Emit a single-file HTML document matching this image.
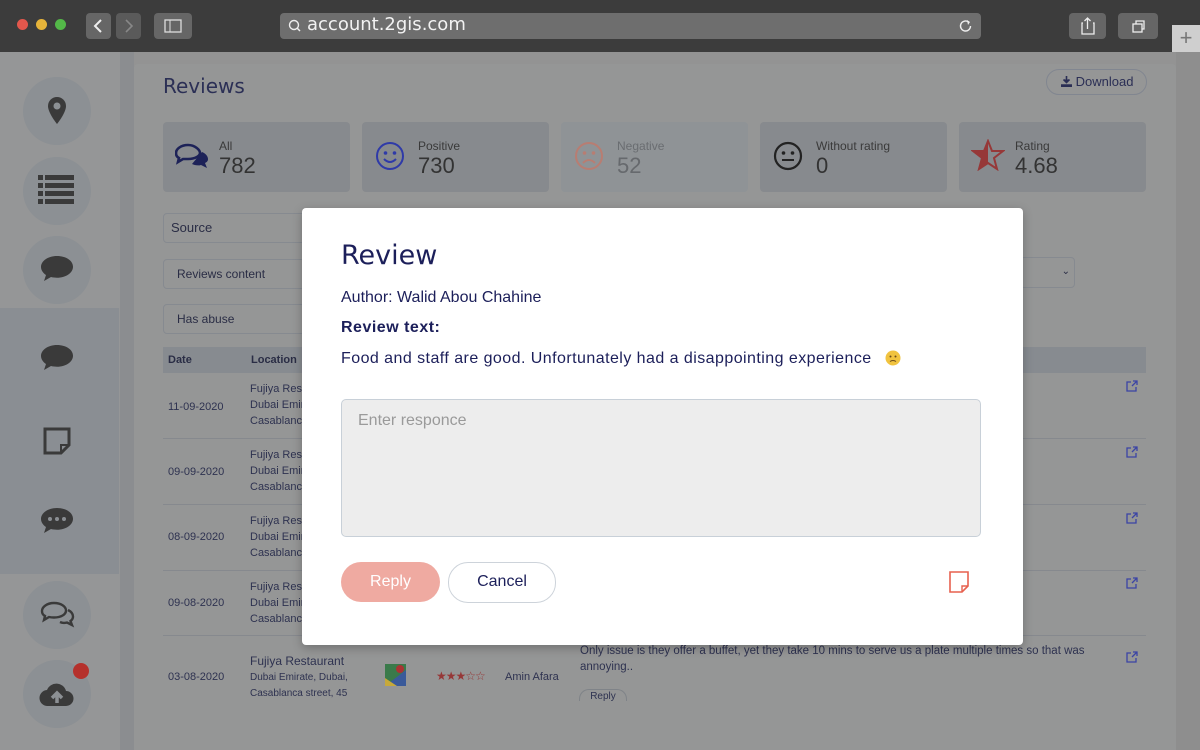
<!DOCTYPE html>
<html><head><meta charset="utf-8"><style>
*{box-sizing:border-box;margin:0;padding:0}
body{width:1200px;height:750px;overflow:hidden;background:#939393;font-family:"Liberation Sans","DejaVu Sans",sans-serif;position:relative}
.a{position:absolute}
.top{left:0;top:0;width:1200px;height:52px;background:#3c3c3c}
.dot{top:19px;width:11px;height:11px;border-radius:50%}
.btn{background:#666;border-radius:4px;top:13px;height:26px}
.side{left:0;top:52px;width:120px;height:698px;background:#959697}
.circ{left:23px;width:68px;height:68px;border-radius:50%;background:#8c9094}
.card{top:122px;width:187px;height:70px;border-radius:4px;background:#878a8e}
.lbl{font-size:12px;color:#3a3a3a}
.num{font-size:22px;color:#333}
.inp{left:163px;width:145px;height:30px;border:1px solid #868a90;border-radius:4px;font-size:12px;color:#2a2d45;padding-left:13px;line-height:28px}
.txt{font-size:11px;color:#2e3250}
.sm{font-size:10px;color:#2e3250;line-height:16px}
.row{left:163px;width:983px;height:1px;background:#86898e}
</style></head><body>
<div class="a top"></div>
<div class="a dot" style="left:17px;background:#e2574c"></div>
<div class="a dot" style="left:36px;background:#e6b43a"></div>
<div class="a dot" style="left:55px;background:#53b848"></div>
<div class="a btn" style="left:86px;width:25px"><svg width="25" height="26"><path d="M15 7l-6 6 6 6" stroke="#eee" stroke-width="2" fill="none"/></svg></div>
<div class="a btn" style="left:116px;width:25px;background:#5a5a5a"><svg width="25" height="26"><path d="M10 7l6 6-6 6" stroke="#888" stroke-width="1.6" fill="none"/></svg></div>
<div class="a btn" style="left:154px;width:38px"><svg width="38" height="26"><rect x="11" y="7" width="16" height="12" stroke="#ddd" fill="none" stroke-width="1.3"/><line x1="16" y1="7" x2="16" y2="19" stroke="#ddd"/></svg></div>
<div class="a btn" style="left:280px;width:701px;background:#6e6e6e"><svg class="a" style="left:7px;top:5px" width="16" height="16"><circle cx="7" cy="7" r="4.5" stroke="#eee" fill="none" stroke-width="1.4"/><line x1="10" y1="10" x2="13" y2="13" stroke="#eee" stroke-width="1.5"/></svg><span class="a" style="left:27px;top:1px;font-size:18px;color:#f2f2f2;font-family:'DejaVu Sans',sans-serif">account.2gis.com</span><svg class="a" style="left:678px;top:5px" width="16" height="16"><path d="M12.5 8a5 5 0 1 1-2-4" stroke="#eee" fill="none" stroke-width="1.4"/><path d="M9 2l3 2-2 3" fill="#eee"/></svg></div>
<div class="a btn" style="left:1069px;width:37px"><svg width="37" height="26"><path d="M14 10h-1v11h12V10h-1M18.5 16V5M15.5 8l3-3 3 3" stroke="#eee" fill="none" stroke-width="1.3"/></svg></div>
<div class="a btn" style="left:1118px;width:40px"><svg width="40" height="26"><rect x="15" y="11" width="9" height="8" stroke="#eee" fill="none" stroke-width="1.3"/><path d="M18 11V8h8v8h-2" stroke="#eee" fill="none" stroke-width="1.3"/></svg></div>
<div class="a" style="left:1172px;top:25px;width:28px;height:27px;background:#cfcfcf;color:#777;font-size:22px;text-align:center;line-height:26px">+</div>

<div class="a side"></div>
<div class="a" style="left:0;top:308px;width:119px;height:266px;background:#8a8e93"></div>
<div class="a" style="left:120px;top:52px;width:14px;height:698px;background:#8b8d90"></div>
<div class="a" style="left:134px;top:64px;width:1042px;height:686px;background:#959696;border-radius:4px"></div>
<div class="a" style="left:1176px;top:52px;width:24px;height:698px;background:#8e8e8e"></div>

<div class="a circ" style="top:77px"></div>
<svg class="a" style="left:45px;top:95px" width="24" height="32"><path d="M12 2a9 9 0 0 0-9 9c0 7 9 18 9 18s9-11 9-18a9 9 0 0 0-9-9z" fill="#3a3a3a"/><circle cx="12" cy="11" r="3.5" fill="#8c9094"/></svg>
<div class="a circ" style="top:157px"></div>
<svg class="a" style="left:38px;top:175px" width="36" height="30"><g fill="#3a3a3a"><rect x="0" y="0" width="5" height="5"/><rect x="7" y="0" width="29" height="5"/><rect x="0" y="8" width="5" height="5"/><rect x="7" y="8" width="29" height="5"/><rect x="0" y="16" width="5" height="5"/><rect x="7" y="16" width="29" height="5"/><rect x="0" y="24" width="5" height="5"/><rect x="7" y="24" width="29" height="5"/></g></svg>
<div class="a circ" style="top:236px"></div>
<svg class="a" style="left:40px;top:254px" width="34" height="30"><path d="M17 2C8 2 1 7 1 13c0 3 2 6 5 8l-2 6 7-4c2 .5 4 .7 6 .7 9 0 16-5 16-11S26 2 17 2z" fill="#3a3a3a"/></svg>
<svg class="a" style="left:40px;top:343px" width="34" height="30"><path d="M17 2C8 2 1 7 1 13c0 3 2 6 5 8l-2 6 7-4c2 .5 4 .7 6 .7 9 0 16-5 16-11S26 2 17 2z" fill="#3a3a3a"/></svg>
<svg class="a" style="left:42px;top:426px" width="30" height="30"><path d="M3 3h24v16l-8 8H3z" stroke="#3a3a3a" stroke-width="3" fill="none"/><path d="M19 27v-8h8" stroke="#3a3a3a" stroke-width="2" fill="none"/></svg>
<svg class="a" style="left:40px;top:506px" width="34" height="30"><path d="M17 2C8 2 1 7 1 13c0 3 2 6 5 8l-2 6 7-4c2 .5 4 .7 6 .7 9 0 16-5 16-11S26 2 17 2z" fill="#3a3a3a"/><circle cx="10" cy="13" r="2" fill="#8a8e93"/><circle cx="17" cy="13" r="2" fill="#8a8e93"/><circle cx="24" cy="13" r="2" fill="#8a8e93"/></svg>
<div class="a circ" style="top:581px"></div>
<svg class="a" style="left:40px;top:600px" width="36" height="30"><path d="M14 3C7 3 2 7 2 11c0 2 1 4 3 5l-1 4 5-3c2 .5 3 .5 5 .5 7 0 12-3 12-7S21 3 14 3z" stroke="#3a3a3a" stroke-width="2.4" fill="none"/><path d="M28 10c3 1.5 5 4 5 6.5 0 2-1 3.5-2.5 4.5l1.5 4-5-2.5c-2 .5-5 .5-7-.5" stroke="#3a3a3a" stroke-width="2.4" fill="none"/></svg>
<div class="a circ" style="top:660px"></div>
<svg class="a" style="left:39px;top:680px" width="36" height="28"><path d="M9 26a8 8 0 0 1-1-16 10 10 0 0 1 19 1 7 7 0 0 1 0 15z" fill="#3a3a3a"/><path d="M18 23v-9M13 18l5-5 5 5" stroke="#8c9094" stroke-width="3.5" fill="none"/></svg>
<div class="a" style="left:73px;top:663px;width:16px;height:16px;border-radius:50%;background:#b5312c"></div>

<div class="a" style="left:163px;top:74px;font-size:20px;color:#2b2f55;font-family:'DejaVu Sans',sans-serif">Reviews</div>
<div class="a" style="left:1046px;top:69px;width:101px;height:26px;border:1px solid #818690;border-radius:13px;font-size:13px;color:#2b2f55;line-height:24px;padding-left:14px"><svg width="11" height="11" style="vertical-align:-1px"><path d="M5.5 0v6M2.5 3.5l3 3 3-3M0 9h11v2H0z" stroke="#2b2f55" stroke-width="1.6" fill="#2b2f55"/></svg> Download</div>

<div class="a card" style="left:163px"></div>
<svg class="a" style="left:175px;top:143px" width="36" height="30"><path d="M13 2C6 2 1 6 1 10c0 2 1 4 3 5l-1 4 5-3h5c7 0 12-3 12-6S20 2 13 2z" stroke="#1d2258" stroke-width="2.6" fill="none"/><path d="M27 9c3 1 6 4 6 7 0 2-1 3-3 4l2 5-6-3c-3 1-7 0-9-1" fill="#1d2258"/></svg>
<div class="a lbl" style="left:219px;top:139px">All</div><div class="a num" style="left:219px;top:153px">782</div>
<div class="a card" style="left:362px"></div>
<svg class="a" style="left:375px;top:141px" width="30" height="30"><circle cx="15" cy="15" r="13" stroke="#2f3aa8" stroke-width="2" fill="none"/><circle cx="10.5" cy="12" r="1.8" fill="#2f3aa8"/><circle cx="19.5" cy="12" r="1.8" fill="#2f3aa8"/><path d="M9 18q6 6 12 0" stroke="#2f3aa8" stroke-width="2" fill="none"/></svg>
<div class="a lbl" style="left:418px;top:139px">Positive</div><div class="a num" style="left:418px;top:153px">730</div>
<div class="a card" style="left:561px;background:#8f9396"></div>
<svg class="a" style="left:574px;top:141px" width="30" height="30"><circle cx="15" cy="15" r="13" stroke="#b87d72" stroke-width="2" fill="none"/><circle cx="10.5" cy="12" r="1.8" fill="#b87d72"/><circle cx="19.5" cy="12" r="1.8" fill="#b87d72"/><path d="M9 22q6-6 12 0" stroke="#b87d72" stroke-width="2" fill="none"/></svg>
<div class="a lbl" style="left:617px;top:139px;color:#6a6d71">Negative</div><div class="a num" style="left:617px;top:153px;color:#66696d">52</div>
<div class="a card" style="left:760px"></div>
<svg class="a" style="left:773px;top:141px" width="30" height="30"><circle cx="15" cy="15" r="13" stroke="#222" stroke-width="2.2" fill="none"/><circle cx="10.5" cy="12" r="1.8" fill="#222"/><circle cx="19.5" cy="12" r="1.8" fill="#222"/><line x1="9" y1="19" x2="21" y2="19" stroke="#222" stroke-width="2"/></svg>
<div class="a lbl" style="left:816px;top:139px">Without rating</div><div class="a num" style="left:816px;top:153px">0</div>
<div class="a card" style="left:959px"></div>
<svg class="a" style="left:971px;top:139px" width="34" height="32"><path d="M17 2l4 10h11l-9 7 3 11-9-6-9 6 3-11-9-7h11z" stroke="#963838" stroke-width="2" fill="none"/><path d="M17 2l-4 10H2l9 7-3 11 9-6z" fill="#963838"/></svg>
<div class="a lbl" style="left:1015px;top:139px">Rating</div><div class="a num" style="left:1015px;top:153px">4.68</div>

<div class="a inp" style="top:213px;font-size:13px;padding-left:7px">Source</div>
<div class="a inp" style="top:259px">Reviews content</div>
<div class="a inp" style="top:304px">Has abuse</div>
<div class="a" style="left:1020px;top:257px;width:55px;height:31px;border:1px solid #868a90;border-radius:4px;font-size:10px;color:#2a2d45;text-align:right;padding-right:4px;line-height:28px">⌄</div>
<div class="a" style="left:163px;top:347px;width:983px;height:26px;background:#878b90"></div>
<div class="a" style="left:168px;top:354px;font-size:11px;font-weight:bold;color:#2a2d45">Date</div>
<div class="a" style="left:251px;top:354px;font-size:11px;font-weight:bold;color:#2a2d45">Location</div>

<div class="a txt" style="left:168px;top:401px">11-09-2020</div>
<div class="a sm" style="left:250px;top:381px;font-size:11px">Fujiya Res<br>Dubai Emir<br>Casablanca</div>
<div class="a row" style="top:438px"></div>
<div class="a txt" style="left:168px;top:466px">09-09-2020</div>
<div class="a sm" style="left:250px;top:447px;font-size:11px">Fujiya Res<br>Dubai Emir<br>Casablanca</div>
<div class="a row" style="top:504px"></div>
<div class="a txt" style="left:168px;top:531px">08-09-2020</div>
<div class="a sm" style="left:250px;top:513px;font-size:11px">Fujiya Res<br>Dubai Emir<br>Casablanca</div>
<div class="a row" style="top:570px"></div>
<div class="a txt" style="left:168px;top:597px">09-08-2020</div>
<div class="a sm" style="left:250px;top:579px;font-size:11px">Fujiya Res<br>Dubai Emir<br>Casablanca</div>
<div class="a row" style="top:635px"></div>
<div class="a txt" style="left:168px;top:671px">03-08-2020</div>
<div class="a" style="left:250px;top:654px;font-size:12px;color:#2e3250">Fujiya Restaurant</div>
<div class="a sm" style="left:250px;top:670px">Dubai Emirate, Dubai,<br>Casablanca street, 45</div>
<svg class="a" style="left:385px;top:664px" width="21" height="22"><rect width="21" height="22" fill="#3a7a4a"/><path d="M0 22L21 6v16z" fill="#3a5a9a"/><path d="M0 14L12 22H0z" fill="#c7a93a"/><circle cx="15" cy="5" r="4" fill="#a33"/></svg>
<div class="a" style="left:436px;top:669px;font-size:12px;color:#963838;letter-spacing:-1px">★★★☆☆</div>
<div class="a txt" style="left:505px;top:671px">Amin Afara</div>
<div class="a" style="left:580px;top:643px;width:520px;font-size:11.5px;color:#2e3250;line-height:16px">Only issue is they offer a buffet, yet they take 10 mins to serve us a plate multiple times so that was annoying..</div>
<div class="a" style="left:579px;top:689px;width:48px;height:12px;border:1px solid #7f8388;border-bottom:none;border-radius:10px 10px 0 0;font-size:10px;color:#2e3250;text-align:center;line-height:14px;overflow:hidden">Reply</div>
<div class="a" style="left:134px;top:701px;width:1042px;height:49px;background:#959696"></div>
<svg class="a" style="left:1126px;top:380px" width="12" height="12"><path d="M5 2H1v9h9V7M6 6l5-5M7 1h4v4" stroke="#3b44a5" stroke-width="1.3" fill="none"/></svg>
<svg class="a" style="left:1126px;top:446px" width="12" height="12"><path d="M5 2H1v9h9V7M6 6l5-5M7 1h4v4" stroke="#3b44a5" stroke-width="1.3" fill="none"/></svg>
<svg class="a" style="left:1126px;top:512px" width="12" height="12"><path d="M5 2H1v9h9V7M6 6l5-5M7 1h4v4" stroke="#3b44a5" stroke-width="1.3" fill="none"/></svg>
<svg class="a" style="left:1126px;top:577px" width="12" height="12"><path d="M5 2H1v9h9V7M6 6l5-5M7 1h4v4" stroke="#3b44a5" stroke-width="1.3" fill="none"/></svg>
<svg class="a" style="left:1126px;top:651px" width="12" height="12"><path d="M5 2H1v9h9V7M6 6l5-5M7 1h4v4" stroke="#3b44a5" stroke-width="1.3" fill="none"/></svg>

<div class="a" style="left:302px;top:208px;width:721px;height:437px;background:#fff;border-radius:4px;box-shadow:0 3px 10px rgba(0,0,0,.25)"></div>
<div class="a" style="left:341px;top:240px;font-size:27px;color:#1c1f5a;font-family:'DejaVu Sans',sans-serif">Review</div>
<div class="a" style="left:341px;top:289px;font-size:16px;color:#1c1f5a">Author: Walid Abou Chahine</div>
<div class="a" style="left:341px;top:319px;font-size:16px;color:#1c1f5a;font-weight:bold;letter-spacing:.5px">Review text:</div>
<div class="a" style="left:341px;top:350px;font-size:16px;color:#1c1f5a;letter-spacing:.45px">Food and staff are good. Unfortunately had a disappointing experience</div>
<svg class="a" style="left:885px;top:350px" width="16" height="16"><circle cx="8" cy="8" r="7.5" fill="#f1c33f"/><circle cx="5.5" cy="6.5" r="1" fill="#6b4a1a"/><circle cx="10.5" cy="6.5" r="1" fill="#6b4a1a"/><path d="M5 11.5q3-2 6 0" stroke="#6b4a1a" stroke-width="1" fill="none"/></svg>
<div class="a" style="left:341px;top:399px;width:640px;height:138px;background:#ededed;border:1px solid #c8d0d8;border-radius:5px;font-size:16px;color:#9a9a9a;padding:12px 16px">Enter responce</div>
<div class="a" style="left:341px;top:562px;width:99px;height:40px;border-radius:20px;background:#efaaa1;color:#fff;font-size:16px;text-align:center;line-height:40px">Reply</div>
<div class="a" style="left:448px;top:562px;width:108px;height:41px;border-radius:20px;border:1px solid #cdd3da;color:#1c1f5a;font-size:16px;text-align:center;line-height:38px">Cancel</div>
<svg class="a" style="left:947px;top:570px" width="24" height="24"><path d="M3 2h18v14l-6 6H3z" stroke="#e7614f" stroke-width="1.6" fill="none"/><path d="M15 22v-6h6" stroke="#e7614f" stroke-width="1.4" fill="none"/></svg>
</body></html>
